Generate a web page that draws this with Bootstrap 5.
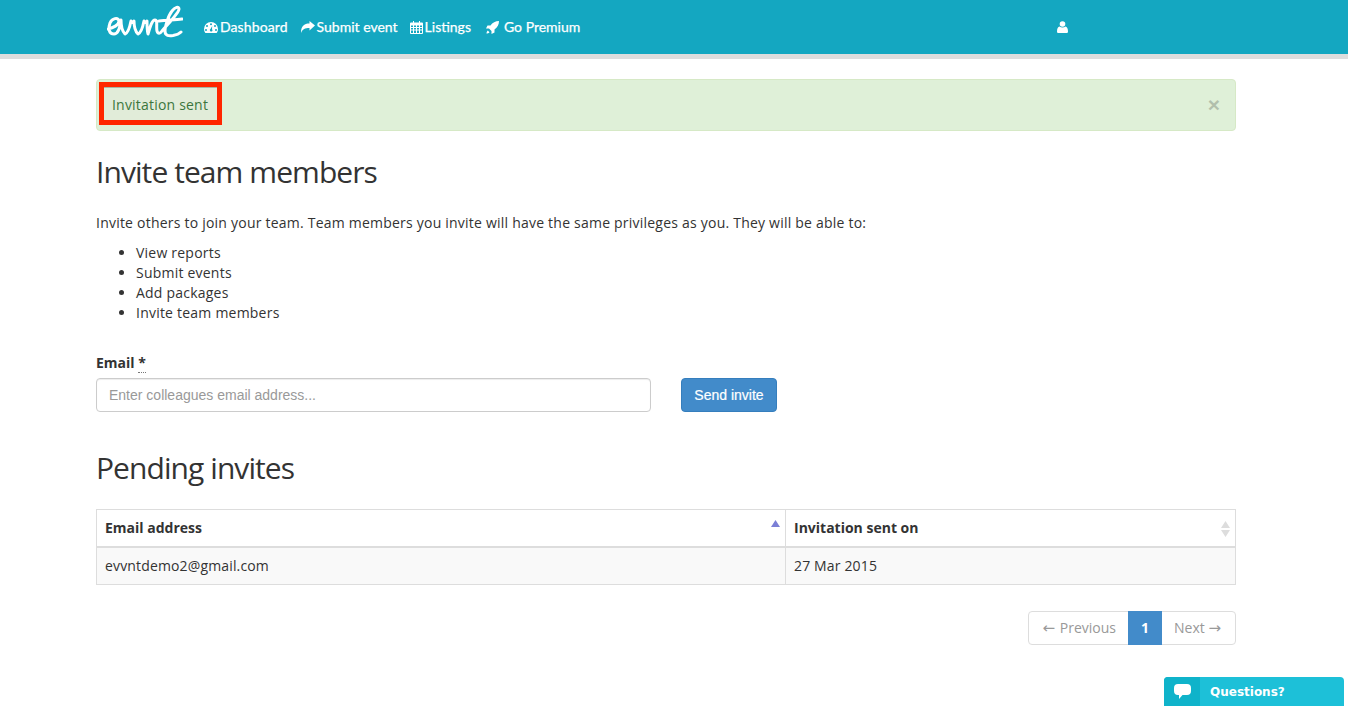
<!doctype html>
<html lang="en">
<head>
<meta charset="utf-8">
<title>Invite team members</title>
<link href="https://cdn.jsdelivr.net/npm/bootstrap@5.3.0/dist/css/bootstrap.min.css" rel="stylesheet">
<style>
html,body{overflow:hidden}
body{font-family:"Open Sans",sans-serif;font-size:14px;line-height:20px;color:#333;background:#fff;height:706px}
.topbar{height:59px;background:#14a7c1;border-bottom:5px solid #ddd;padding:0;align-items:stretch;justify-content:flex-start;flex-wrap:nowrap}
.shell{width:1140px;margin-left:96px}
.topbar-in{display:flex;align-items:center;height:54px;position:relative}
.brandmark{padding:0;margin:0 0 10px 11px;display:block;line-height:0}
.toplinks{display:flex;flex-direction:row;margin-left:21px;font-family:Lato,sans-serif;font-size:14px;-webkit-text-stroke:.25px #fff}
.toplinks a{color:#fff;text-decoration:none;display:flex;align-items:center;gap:2px;white-space:nowrap}
.toplinks a:first-child{letter-spacing:.1px}
.toplinks .linksubmit{margin-left:13px}
.toplinks .linklist{margin-left:12px}
.toplinks .linkgo{margin-left:15px;gap:5px}
.toplinks svg{fill:#fff;display:block}
.usermark{margin-left:auto;margin-right:168px;fill:#fff;display:block}
.noticebox{height:52px;margin:20px 0 0;padding:2px;background:#dff0d8;border:1px solid #d6e9c6;border-radius:4px;color:#3c763d;display:flex;align-items:flex-start;justify-content:space-between}
.noticetext{display:block;height:43px;width:123px;border:5px solid #ff2600;background:#e1ecd9;padding:1px 0 0 8px;line-height:33px;letter-spacing:.2px;box-shadow:inset 0 1px 0 #aab5a4}
.noticex{background:none;border:0;padding:0;margin:13px 13px 0 0;font-family:"Liberation Sans",sans-serif;font-weight:700;font-size:21px;line-height:20px;color:#000;opacity:.2}
.pagehead{font-family:"Open Sans",sans-serif;font-size:30px;line-height:33px;font-weight:400;letter-spacing:-.93px;margin:0;color:#333}
.headone{margin-top:24px}
.introtext{margin:25px 0 0;letter-spacing:.22px}
.perks{margin:10px 0 0;padding-left:40px;letter-spacing:.22px}
.invform{margin-top:30px}
.invlabel{display:block;font-weight:700;margin:0 0 5px;line-height:20px}
.invlabel abbr{text-decoration:none;border-bottom:1px dotted #777;cursor:help}
.invrow{display:flex;gap:30px}
.invinput{width:555px;height:34px;font-family:"Liberation Sans",sans-serif;font-size:14px;color:#555;border:1px solid #ccc;border-radius:4px;padding:6px 12px;box-shadow:inset 0 1px 1px rgba(0,0,0,.075)}
.invinput::placeholder{color:#999;opacity:1}
.invsend{width:96px;height:34px;padding:0;font-family:"Liberation Sans",sans-serif;font-size:14px;background:#428bca;border:1px solid #357ebd;border-radius:4px;color:#fff;-webkit-text-stroke:.2px #fff}
.headtwo{margin-top:39px}
.invtable{width:1140px;margin:25px 0 0;border-collapse:collapse;table-layout:fixed;color:#333}
.invtable th,.invtable td{border:1px solid #ddd;padding:8px;line-height:20px;height:37px;vertical-align:middle;box-shadow:none}
.invtable thead th{border-bottom:2px solid #ddd;background:#fff;font-weight:700;position:relative}
.invtable tbody td{background:#f9f9f9;border-top:0;letter-spacing:.15px}
.sortmark{position:absolute;right:5px;top:10px;display:block}
.pagerwrap{display:flex;justify-content:flex-end;margin-top:26px}
.pagerlist{margin:0;--bs-pagination-font-size:14px}
.pagerlist .page-link{height:34px;line-height:20px;padding:6px 12px;color:#999;border-color:#ddd;background:#fff;margin:0}
.pagerlist .page-item.active .page-link{background:#428bca;border-color:#428bca;color:#fff;font-weight:700}
.pagerlist .page-item:first-child .page-link,.pagerlist .page-item:last-child .page-link{border-radius:4px}
.pagerlist .page-item:first-child .page-link{border-top-right-radius:0;border-bottom-right-radius:0;padding-left:14px}
.pagerlist .page-item:last-child .page-link{border-top-left-radius:0;border-bottom-left-radius:0;padding-right:14px}
.pagerarrow{font-family:"DejaVu Sans",sans-serif;font-size:15px}
.pagerback{margin-right:1px}
.askwidget{position:fixed;left:1164px;top:677px;width:180px;height:29px;background:#1dc0d8;border-radius:4px 4px 0 0;display:flex;align-items:center;overflow:hidden;color:#fff;font-family:"DejaVu Sans",sans-serif;font-weight:700;font-size:12px}
.askicon{width:36px;height:29px;background:#0fb3ca;display:flex;align-items:center;justify-content:center}
.asktext{margin-left:10px}
</style>
</head>
<body>
<nav class="navbar topbar">
  <div class="shell topbar-in">
    <a class="navbar-brand brandmark" href="#" aria-label="evvnt">
      <svg width="76" height="34" viewBox="0 0 76 34" fill="none" stroke="#fff" stroke-width="3" stroke-linecap="round" stroke-linejoin="round"><path d="M1 24C6 23 12 20 12 16C11 12 5 13 3 18C1 24 2 29 7 29C11 29 13 23 14 15C14 21 15 26 18 29C21 28 23 21 24 16C25 18 26 18 27 16C27 21 28 26 31 29C34 28 36 21 37 16C38 18 39 18 40 16C40 21 40 25 41 29C43 22 45 15 48 15C51 15 49 22 50 26C51 29 53 29 55 26C60 20 72 8 72 4C72 1 68 2 65 6C61 11 58 22 58 26C58 31 62 31 66 30.500C69 30 72 29 74 27M52 16C60 15 68 15 75 14"/></svg>
    </a>
    <div class="toplinks">
      <a href="#"><svg width="14" height="12" viewBox="0 0 14 12"><path fill-rule="evenodd" d="M7 1a7 7 0 0 0-7 7c0 1.300.4 2.600 1 3.500l.4.500h11.200l.4-.5c.6-.9 1-2.200 1-3.500a7 7 0 0 0-7-7zM7 2.300a1 1 0 1 1 0 2 1 1 0 0 1 0-2zM3 4a1 1 0 1 1 0 2 1 1 0 0 1 0-2zM11 4a1 1 0 1 1 0 2 1 1 0 0 1 0-2zM2 8a1 1 0 1 1 0 2 1 1 0 0 1 0-2zM12 8a1 1 0 1 1 0 2 1 1 0 0 1 0-2zM8.200 5L8 8.200a1.300 1.300 0 1 1-1.500-.1z"/></svg>Dashboard</a>
      <a href="#" class="linksubmit"><svg width="14" height="12" viewBox="0 0 14 12"><path d="M14 4.500L8.500 0v2.500C3 2.500 0 5 0 12c1.500-4 4-5 8.500-5v2.500z"/></svg>Submit event</a>
      <a href="#" class="linklist"><svg width="13" height="13" viewBox="0 0 13 13"><path fill-rule="evenodd" d="M3 0h1v1.500h5V0h1v1.500h2a1 1 0 0 1 1 1V12a1 1 0 0 1-1 1H1a1 1 0 0 1-1-1V2.500a1 1 0 0 1 1-1h2zM1 4.500V6h2V4.500zM4 4.500V6h2V4.500zM7 4.500V6h2V4.500zM10 4.500V6h2V4.500zM1 7v1.500h2V7zM4 7v1.500h2V7zM7 7v1.500h2V7zM10 7v1.500h2V7zM1 9.500V12h2V9.500zM4 9.500V12h2V9.500zM7 9.500V12h2V9.500zM10 9.500V12h2V9.500z"/></svg>Listings</a>
      <a href="#" class="linkgo"><svg width="13" height="13" viewBox="0 0 13 13"><path d="M13 0C9.500 0 6.500 1.500 4.500 4.500H1.500L0 7.500h3L5.500 10v3l3-1.500v-3C11.500 6.500 13 3.500 13 0zM1.800 9.500C.8 10.300.5 11.500.5 12.500c1 0 2.200-.3 3-1.300z"/></svg>Go Premium</a>
    </div>
    <svg class="usermark" width="11" height="12" viewBox="0 0 11 12"><circle cx="5.500" cy="3" r="2.800"/><path d="M0 10.500C0 7.500 1 6 2.500 5.500c1.600 1.300 4.400 1.300 6 0C10 6 11 7.500 11 10.500c0 1-.7 1.500-1.500 1.500h-8C.7 12 0 11.500 0 10.500z"/></svg>
  </div>
</nav>
<main class="shell">
  <div class="noticebox" role="alert">
    <span class="noticetext">Invitation sent</span>
    <button type="button" class="noticex" aria-label="Close">×</button>
  </div>
  <h1 class="pagehead headone">Invite team members</h1>
  <p class="introtext">Invite others to join your team. Team members you invite will have the same privileges as you. They will be able to:</p>
  <ul class="perks">
    <li>View reports</li>
    <li>Submit events</li>
    <li>Add packages</li>
    <li>Invite team members</li>
  </ul>
  <form class="invform">
    <label class="invlabel" for="invemail">Email <abbr title="required">*</abbr></label>
    <div class="invrow">
      <input id="invemail" class="form-control invinput" type="email" placeholder="Enter colleagues email address...">
      <button type="button" class="btn invsend">Send invite</button>
    </div>
  </form>
  <h2 class="pagehead headtwo">Pending invites</h2>
  <table class="invtable">
    <colgroup><col style="width:689px"><col></colgroup>
    <thead>
      <tr>
        <th>Email address<svg class="sortmark" width="9" height="8" viewBox="0 0 9 8"><path fill="#7b7fd6" d="M4.500 0L9 7H0z"/></svg></th>
        <th>Invitation sent on<svg class="sortmark" style="top:11px" width="9" height="16" viewBox="0 0 9 16"><path fill="#ddd" d="M4.500 0L9 7H0zM4.500 16L0 9h9z"/></svg></th>
      </tr>
    </thead>
    <tbody>
      <tr><td>evvntdemo2@gmail.com</td><td>27 Mar 2015</td></tr>
    </tbody>
  </table>
  <nav class="pagerwrap" aria-label="Pages">
    <ul class="pagination pagerlist">
      <li class="page-item disabled"><a class="page-link" href="#"><span class="pagerarrow pagerback">←</span> Previous</a></li>
      <li class="page-item active"><a class="page-link" href="#">1</a></li>
      <li class="page-item disabled"><a class="page-link" href="#">Next <span class="pagerarrow">→</span></a></li>
    </ul>
  </nav>
</main>
<div class="askwidget">
  <span class="askicon"><svg width="17" height="15" viewBox="0 0 17 15"><path fill="#fff" d="M4 0h9a4 4 0 0 1 4 4v3a4 4 0 0 1-4 4H8.500L5 15v-4H4a4 4 0 0 1-4-4V4a4 4 0 0 1 4-4z"/></svg></span>
  <span class="asktext">Questions?</span>
</div>
<script src="https://cdn.jsdelivr.net/npm/bootstrap@5.3.0/dist/js/bootstrap.bundle.min.js"></script>
</body>
</html>
